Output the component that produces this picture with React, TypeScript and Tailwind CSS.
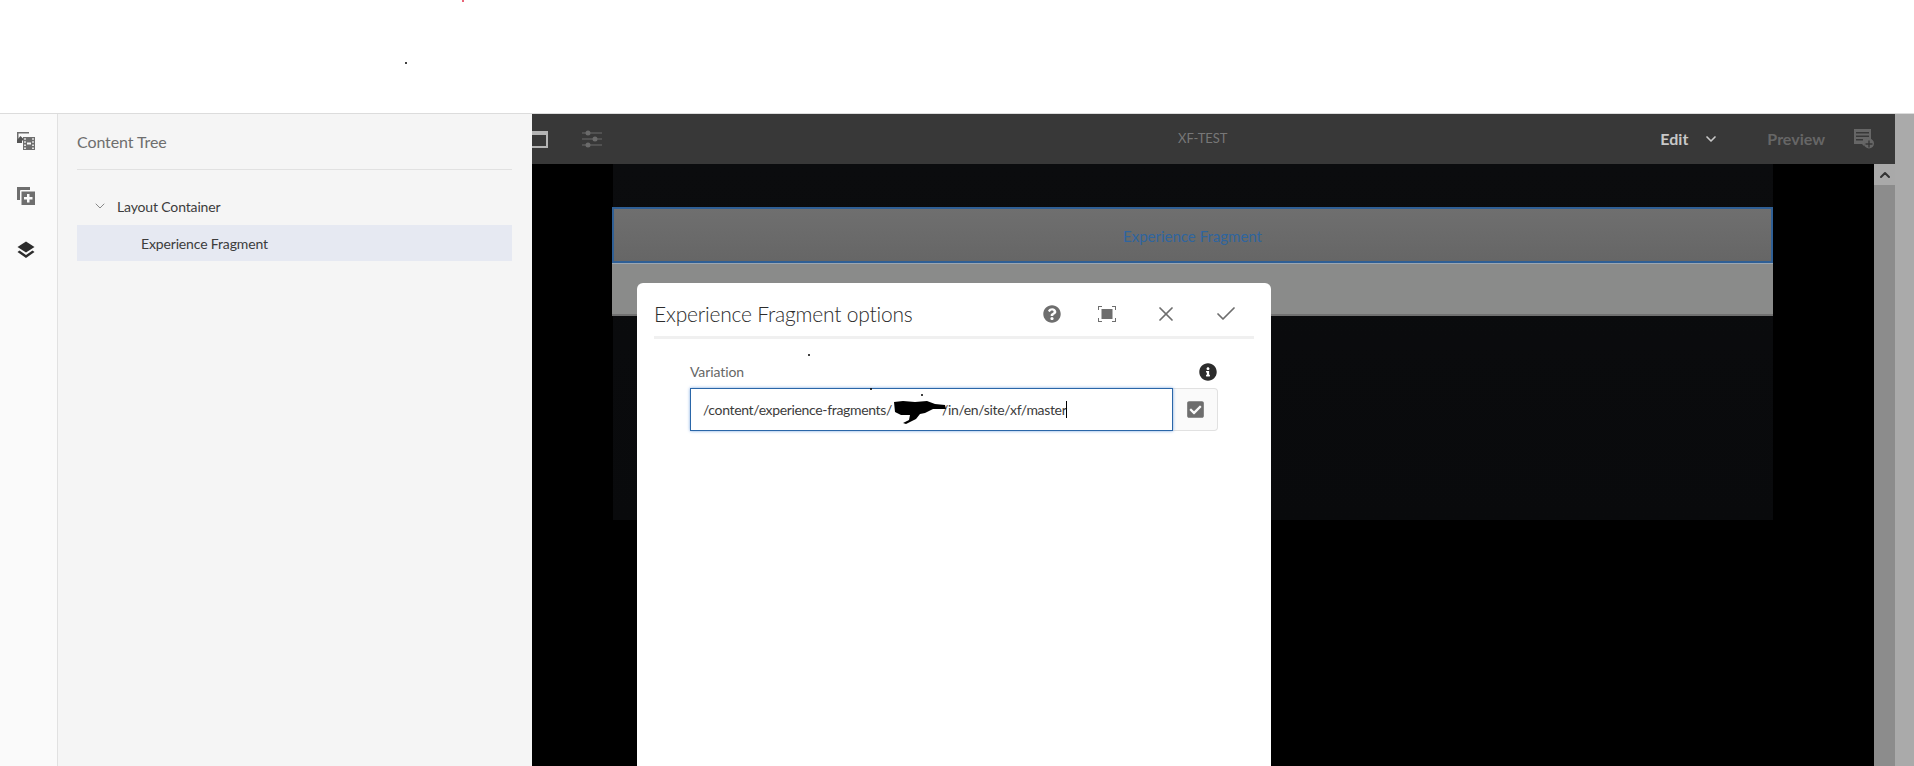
import { Check, ChevronDown, ChevronUp, X } from 'lucide-react';
import { FaCheckSquare, FaInfoCircle, FaQuestionCircle } from 'react-icons/fa';

const font = "font-['Lato','Open_Sans',sans-serif]";

function AssetsIcon() {
  return (
    <svg width="20" height="20" viewBox="0 0 20 20" fill="#6e6e6e">
      <path d="M1 1h12v1.500H2.500V9H1z" />
      <path d="M1 9l3.500-4 2.500 2.500V9.500H6V12H1z" fill="#555" />
      <path d="M7 6h12v13H7zM8.200 7.200v1.600h1.600V7.200zm8 0v1.600h1.600V7.200zM8.200 10.200v1.600h1.600v-1.600zm8 0v1.600h1.600v-1.600zM8.200 13.400V15h1.600v-1.600zm8 0V15h1.600v-1.600zM8.200 16.400V18h1.600v-1.600zm8 0V18h1.600v-1.600zM11 11.600v2h4v-2z" fillRule="evenodd" />
    </svg>
  );
}

function ComponentsIcon() {
  return (
    <svg width="20" height="20" viewBox="0 0 20 20" fill="#6e6e6e">
      <path d="M1 1h13v3H5a1 1 0 0 0-1 1v9H1z" />
      <path d="M5.500 5.500H19V19H5.500zM11 8v3H8v2.500h3v3h2.500v-3h3V11h-3V8z" fillRule="evenodd" />
    </svg>
  );
}

function LayersIcon() {
  return (
    <svg width="18" height="18" viewBox="0 0 18 18" fill="#2c2c2c">
      <path d="M9 0.500L17.500 6 9 11.500 0.500 6z" />
      <path d="M2.500 9.500L0.500 11 9 17 17.500 11l-2-1.500L9 14z" />
    </svg>
  );
}

function SlidersIcon() {
  return (
    <svg width="22" height="18" viewBox="0 0 22 18" fill="#6a6a6a">
      <path d="M1 2.500h20v1H1zM1 8.500h20v1H1zM1 14.500h20v1H1z" />
      <circle cx="7" cy="3" r="2.500" />
      <circle cx="14" cy="9" r="2.500" />
      <circle cx="7" cy="15" r="2.500" />
    </svg>
  );
}

function FullscreenIcon() {
  return (
    <svg width="18" height="16" viewBox="0 0 18 16" fill="#6e6e6e">
      <rect x="3.500" y="3" width="11" height="10" />
      <path d="M0 0h4v1H1v3H0zM14 0h4v4h-1V1h-3zM0 12h1v3h3v1H0zM17 12h1v4h-4v-1h3z" />
    </svg>
  );
}

function NoteAddIcon() {
  return (
    <svg width="22" height="20" viewBox="0 0 22 20" fill="#666">
      <path d="M1 0h17v10a6 6 0 0 0-6.500 7.500L9 15H1z" />
      <path d="M3 3h13v1.500H3zM3 6.500h13V8H3zM3 10h7v1.500H3z" fill="#383838" />
      <path d="M16 9.500a5 5 0 1 0 0 10 5 5 0 0 0 0-10zm-.7 2h1.400v2.800h2.800v1.400h-2.800v2.800h-1.400v-2.800h-2.800v-1.400h2.800z" fillRule="evenodd" />
    </svg>
  );
}

// the marker scribble over the redacted path segment
function Scribble() {
  return (
    <svg width="54" height="26" viewBox="0 0 54 26" className="absolute left-[202px] top-[11px]">
      <path d="M1 2L10 1 22 2 34 1 42 4 52 5 53 9 40 9 32 13 27 14 23 19 13 24 10 23 16 20 17 15 8 15 2 12z" fill="#000" />
    </svg>
  );
}

function Dot({ className }: { className: string }) {
  return <div className={`absolute w-[2px] h-[2px] rounded-full ${className}`} />;
}

export default function App() {
  return (
    <div className={`relative flex flex-col h-[766px] overflow-hidden bg-white ${font}`}>
      <div className="h-[114px] shrink-0 bg-white border-b border-[#dcdcdc]" />
      <Dot className="left-[462px] top-0 bg-[#e0304a]" />
      <Dot className="left-[405px] top-[62px] bg-black" />

      <div className="flex flex-1 min-h-0">
        {/* Left rail */}
        <div className="w-[58px] shrink-0 bg-[#fafafa] border-r border-[#e1e1e1] flex flex-col items-center pt-[17px] gap-[35px] pr-[5px]">
          <AssetsIcon />
          <ComponentsIcon />
          <LayersIcon />
        </div>

        {/* Content tree */}
        <div className="w-[474px] shrink-0 bg-[#f5f5f5] pl-[19px] pr-[20px]">
          <div className="h-[56px] flex items-center border-b border-[#e1e1e1] text-[16px] tracking-[-0.1px] text-[#6e6e6e] pt-[1px]">
            Content Tree
          </div>
          <div className="h-[55px] flex items-center pt-[17px] text-[14px] tracking-[-0.15px] text-[#3c3c3c]">
            <ChevronDown className="w-4 h-4 ml-[15px] mr-[9px] text-[#888]" strokeWidth={1.5} />
            Layout Container
          </div>
          <div className="h-[36px] flex items-center bg-[#e6e9f2] pl-[64px] text-[14px] tracking-[-0.15px] text-[#3c3c3c]">
            Experience Fragment
          </div>
        </div>

        {/* Editor */}
        <div className="relative flex-1 min-w-0 flex">
          <div className="flex-1 min-w-0 flex flex-col">
            <div className="h-[50px] shrink-0 bg-[#383838] flex items-center">
              <div className="w-[16px] h-[17px] border-2 border-t-4 border-l-0 border-[#b4b4b4] shrink-0" />
              <div className="ml-[33px]">
                <SlidersIcon />
              </div>
              <div className="ml-[575px] mr-auto text-[13px] text-[#777]">XF-TEST</div>
              <span className="text-[16px] font-bold text-[#c8c8c8]">Edit</span>
              <ChevronDown className="w-4 h-4 ml-[15px] text-[#c8c8c8]" strokeWidth={2.5} />
              <span className="ml-[48px] text-[16px] font-bold text-[#666]">Preview</span>
              <div className="ml-[28px] mr-[20px]">
                <NoteAddIcon />
              </div>
            </div>

            <div className="flex-1 min-h-0 flex bg-black">
              <div className="flex-1 min-w-0 pl-[81px]">
                <div className="w-[1160px] h-[356px] pt-[43px] bg-gradient-to-b from-[#0b0c0e] to-[#090a0c]">
                  <div className="h-[56px] -ml-px pt-[3px] flex items-center justify-center bg-gradient-to-b from-[#6f6f6f] to-[#666] border-2 border-[#2f5f95] text-[15px] text-[#2f659f]">
                    Experience Fragment
                  </div>
                  <div className="h-[53px] -ml-px bg-[#8a8b8a] border-t border-t-[#9aa6b2] border-b-2 border-b-[#707070]" />
                </div>
              </div>
              <div className="w-[21px] shrink-0 flex flex-col bg-[#8c8c8c]">
                <div className="h-[21px] bg-[#a9a9a9] flex items-center justify-center">
                  <ChevronUp className="w-4 h-4 text-[#333]" strokeWidth={3} />
                </div>
              </div>
            </div>
          </div>
          <div className="w-[19px] shrink-0 bg-[#aaaaaa]" />

          {/* Dialog */}
          <div className="absolute left-[105px] top-[169px] bottom-0 w-[634px] bg-white rounded-t-[6px] px-[17px]">
            <div className="h-[56px] pt-[8px] flex items-center border-b-[3px] border-[#f0f0f0] pr-[16px]">
              <span className="flex-1 text-[21px] tracking-[-0.2px] font-light text-[#2c2c2c]">Experience Fragment options</span>
              <FaQuestionCircle className="w-[18px] h-[18px] text-[#6e6e6e] mr-[37px]" />
              <div className="mr-[38px]">
                <FullscreenIcon />
              </div>
              <X className="w-[24px] h-[24px] text-[#6e6e6e] mr-[36px]" strokeWidth={1.75} />
              <Check className="w-[24px] h-[24px] text-[#6e6e6e]" strokeWidth={1.75} />
            </div>

            <div className="pl-[36px] pr-[36px]">
              <div className="h-[49px] flex items-end justify-between pb-[6px] text-[14px] tracking-[-0.1px] text-[#666]">
                <span>Variation</span>
                <FaInfoCircle className="w-[18px] h-[18px] text-[#2c2c2c] mr-[1px] mb-[1px]" />
              </div>
              <div className="flex h-[43px]">
                <div className="relative w-[484px] border-[1.5px] border-[#2a66a8] shadow-[0_0_3px_#7aa7e0] flex items-center pl-[12px] pb-px text-[14px] tracking-[-0.34px] text-[#3c3c3c]">
                  /content/experience-fragments/<span className="w-[50px] shrink-0" />/in/en/site/xf/master
                  <span className="w-px h-[17px] bg-black" />
                  <Scribble />
                </div>
                <div className="w-[45px] border border-l-0 border-[#e1e1e1] rounded-r-[4px] bg-[#fafafa] flex items-center justify-center">
                  <FaCheckSquare className="w-[19px] h-[19px] text-[#6e6e6e]" />
                </div>
              </div>
            </div>
          </div>
          <Dot className="left-[276px] top-[240px] bg-black" />
          <Dot className="left-[338px] top-[274px] bg-black" />
          <Dot className="left-[389px] top-[280px] bg-black" />
        </div>
      </div>
    </div>
  );
}
